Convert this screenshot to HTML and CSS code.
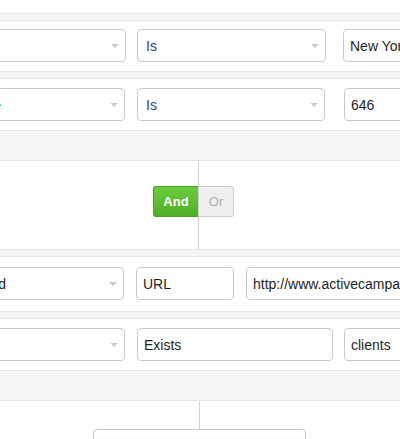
FILE: index.html
```html
<!DOCTYPE html>
<html>
<head>
<meta charset="utf-8">
<link rel="stylesheet" href="styles.css">
</head>
<body>
<div class="page">
  <div class="row partial"></div>
  <div class="gap"></div>

  <div class="row r1">
    <div class="field select w1a"><span class="caret"></span></div>
    <div class="field select w1b"><span>Is</span><span class="caret"></span></div>
    <div class="field w1c"><span>New York</span></div>
  </div>
  <div class="gap"></div>

  <div class="row r2">
    <div class="field select w2a"><span class="tail t2">Phone</span><span class="caret"></span></div>
    <div class="field select w2b"><span>Is</span><span class="caret"></span></div>
    <div class="field w2c"><span>646</span></div>
  </div>
  <div class="foot"></div>

  <div class="connector">
    <div class="toggle">
      <span class="opt and">And</span><span class="opt or">Or</span>
    </div>
  </div>

  <div class="gap"></div>
  <div class="row r3">
    <div class="field select dark w3a"><span class="tail t3">Has clicked</span><span class="caret"></span></div>
    <div class="field w3b"><span>URL</span></div>
    <div class="field w3c"><span>http://www.activecampaign.com</span></div>
  </div>
  <div class="gap"></div>

  <div class="row r4">
    <div class="field select w4a"><span class="caret"></span></div>
    <div class="field w4b"><span>Exists</span></div>
    <div class="field w4c"><span>clients</span></div>
  </div>
  <div class="foot"></div>

  <div class="connector end">
    <div class="addbtn"></div>
  </div>
</div>
</body>
</html>
```

FILE: styles.css
```css
* { box-sizing: border-box; }
html, body { margin: 0; padding: 0; }
body {
  width: 400px;
  height: 439px;
  overflow: hidden;
  background: #fff;
  font-family: "Liberation Sans", Arial, sans-serif;
  font-size: 14px;
  color: #1e1e1e;
}
.page { width: 400px; }

.row {
  display: flex;
  white-space: nowrap;
  background: #fff;
  border-top: 1px solid #e5e5e5;
  border-bottom: 1px solid #e5e5e5;
  padding: 8px 0 9px;
}
.row.partial { height: 14px; border-top: none; padding: 0; }
.row.r2 { padding: 9px 0 9px; }
.row.r3 { padding: 10px 0 11px; }
.row.r4 { padding: 9px 0 9px; }

.gap { height: 6px; background: #f6f6f6; }
.foot { height: 29px; background: #f6f6f6; }

.field {
  flex: none;
  height: 33px;
  display: flex;
  align-items: center;
  padding: 0 6px;
  background: #fff;
  border: 1px solid #cacaca;
  border-radius: 4px;
  overflow: hidden;
}
.select { padding: 0 6px 0 8px; color: #233f8c; }
.select.dark { color: #1e1e2a; }
.caret {
  margin-left: auto;
  flex: none;
  width: 0;
  height: 0;
  border-left: 4px solid transparent;
  border-right: 4px solid transparent;
  border-top: 4px solid #c9c9c9;
}
.tail {
  display: inline-block;
  direction: rtl;
  white-space: nowrap;
  margin-left: -8px;
}
.t2 { width: 20px; }
.t3 { width: 25px; }

.w1a { margin-left: -20px; width: 146px; }
.w1b { margin-left: 11px; width: 189px; }
.w1c { margin-left: 17px; width: 120px; }

.w2a { margin-left: -20px; width: 145px; }
.w2b { margin-left: 12px; width: 188px; }
.w2c { margin-left: 19px; width: 120px; }

.w3a { margin-left: -20px; width: 144px; }
.w3b { margin-left: 12px; width: 98px; }
.w3c { margin-left: 12px; width: 220px; }

.w4a { margin-left: -20px; width: 145px; }
.w4b { margin-left: 12px; width: 196px; }
.w4c { margin-left: 11px; width: 120px; }

.connector {
  height: 90px;
  border-top: 1px solid #e5e5e5;
  border-bottom: 1px solid #e5e5e5;
  background: #fff linear-gradient(#d0d0d0, #d0d0d0) 198px 0 / 1px 100% no-repeat;
  padding: 25px 0 0 153px;
}
.toggle { display: flex; height: 31px; }
.opt {
  display: flex;
  align-items: center;
  justify-content: center;
  height: 31px;
  font-size: 13px;
  font-weight: bold;
}
.and {
  width: 45px;
  color: #fff;
  background: linear-gradient(#6ccb3d, #4eae26);
  border: 1px solid #4c9f2b;
  border-right: none;
  border-radius: 3px 0 0 3px;
}
.or {
  width: 36px;
  color: #ababab;
  background: #efefef;
  border: 1px solid #cfcfcf;
  border-left: 1px solid #d0d0d0;
  border-radius: 0 3px 3px 0;
  font-weight: normal;
}

.connector.end {
  height: 40px;
  border-bottom: none;
  background-position: 199px 0;
  padding: 28px 0 0 93px;
}
.addbtn {
  width: 213px;
  height: 30px;
  border: 1px solid #cacaca;
  border-radius: 4px 4px 0 0;
  background: linear-gradient(#fff, #f4f4f4);
}
```
